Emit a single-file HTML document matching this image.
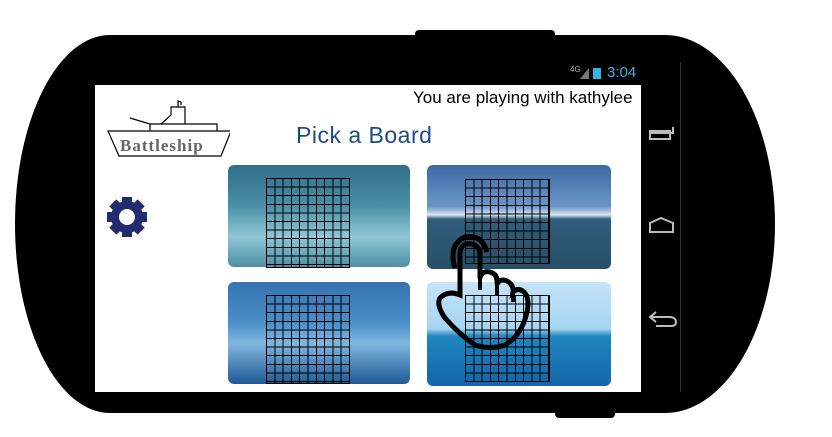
<!DOCTYPE html>
<html><head><style>
body{margin:0;width:832px;height:437px;background:#fff;position:relative;overflow:hidden;font-family:"Liberation Sans",sans-serif}
.abs{position:absolute}
.tile{position:absolute;border-radius:6px;overflow:hidden}
.grid{position:absolute;border:1px solid #000;box-sizing:border-box;
background-image:repeating-linear-gradient(90deg,transparent 0 7.3px,#000 7.3px 8.3px),repeating-linear-gradient(180deg,transparent 0 7.6px,#000 7.6px 8.6px)}
</style></head><body>
<div class="abs" style="left:415px;top:30px;width:140px;height:12px;background:#000;border-radius:4px"></div>
<div class="abs" style="left:555px;top:405px;width:60px;height:13px;background:#000;border-radius:4px"></div>
<div class="abs" style="left:15px;top:35px;width:760px;height:378px;background:#000;border-radius:95px 110px 110px 95px / 189px 189px 189px 189px"></div>
<div class="abs" style="left:680px;top:62px;width:1px;height:330px;background:#333"></div>
<div class="abs" style="left:95px;top:62px;width:546px;height:330px;background:#fff"></div>
<div class="abs" style="left:95px;top:62px;width:546px;height:23px;background:#000"></div>
<div class="abs" style="left:570px;top:65px;font-size:8px;color:#aaa">4G</div>
<div class="abs" style="left:580px;top:68px;width:0;height:0;border-left:9px solid transparent;border-bottom:11px solid #777"></div>
<div class="abs" style="left:593px;top:68px;width:8px;height:11px;background:#33b5e5"></div>
<div class="abs" style="left:607px;top:64px;font-size:15px;color:#33b5e5">3:04</div>
<div class="abs" style="left:413px;top:88px;font-size:17px;color:#000;white-space:nowrap">You are playing with kathylee</div>
<div class="abs" style="left:296px;top:122px;font-size:23px;color:#1e4b80;letter-spacing:0.5px">Pick a Board</div>
<svg class="abs" style="left:105px;top:100px" width="125" height="60">
<path d="M3,31 L126,31 L116,56 L14,56 Z M45,31 L45,24 L112,24 L112,31 M56,24 L66,15 L66,7 L80,7 L80,24 M73,7 L73,1 L76,2 L76,5 M45,24 L25,18" fill="#fff" stroke="#000" stroke-width="1.2"/>
<text x="15" y="51" font-size="17" font-weight="bold" fill="#666" font-family="Liberation Serif" letter-spacing="1">Battleship</text>
</svg>
<svg class="abs" style="left:106px;top:196px" width="42" height="42" viewBox="0 0 42 42">
<circle cx="21" cy="21" r="12" fill="none" stroke="#222a70" stroke-width="8"/>
<g fill="#222a70"><rect x="16" y="1" width="10" height="8"/><rect x="16" y="33" width="10" height="8"/><rect x="1" y="16" width="8" height="10"/><rect x="33" y="16" width="8" height="10"/>
<g transform="rotate(45 21 21)"><rect x="16" y="1" width="10" height="8"/><rect x="16" y="33" width="10" height="8"/><rect x="1" y="16" width="8" height="10"/><rect x="33" y="16" width="8" height="10"/></g></g>
</svg>
<div class="tile" style="left:228px;top:165px;width:182px;height:102px;background:linear-gradient(180deg,#2f6f88,#4a8fa6 40%,#8ec8d6 70%,#4e8fa5)"></div>
<div class="tile" style="left:427px;top:165px;width:184px;height:104px;background:linear-gradient(180deg,#3a6aa5,#6c95c5 40%,#d8e4f0 48%,#2f5d7c 52%,#284e66)"></div>
<div class="tile" style="left:228px;top:282px;width:182px;height:102px;background:linear-gradient(180deg,#3473b0,#4b8ec8 40%,#7fb7e0 60%,#205a95)"></div>
<div class="tile" style="left:427px;top:282px;width:184px;height:104px;background:linear-gradient(180deg,#c5e4f8,#a6d4f0 45%,#1f86c0 52%,#1366a8)"></div>
<div class="grid" style="left:266px;top:178px;width:84px;height:90px"></div>
<div class="grid" style="left:465px;top:179px;width:85px;height:85px"></div>
<div class="grid" style="left:266px;top:295px;width:84px;height:89px"></div>
<div class="grid" style="left:465px;top:295px;width:85px;height:87px"></div>
<svg class="abs" style="left:0;top:0" width="832" height="437">
<path d="M460,295 L460,252 Q462,242 472,244 Q480,246 480,256 L480,278 Q482,270 490,272 Q498,274 497,284 Q500,278 507,281 Q514,285 513,292 Q518,287 524,292 Q530,298 527,312 Q522,335 505,345 Q490,350 475,345 Q460,335 445,318 Q436,305 440,298 Q448,290 460,295 Z" fill="none" stroke="#000" stroke-width="5"/>
<path d="M455,268 Q448,245 465,237 Q482,234 487,252" fill="none" stroke="#000" stroke-width="5"/>
<path d="M480,278 L480,290 M497,284 L497,296 M513,292 L513,302" stroke="#000" stroke-width="4"/>
<g fill="none" stroke="#bbb" stroke-width="2">
<path d="M650,133 H673 V127 M650,139 H670 V131 H650 Z"/>
<path d="M650,232 V223 L661,218 L673,223 V232 Z"/>
<path d="M656,312 L650,317 L656,322 M650,317 H671 Q676,318 676,322 Q676,326 671,326 H656"/>
</g>
</svg>
</body></html>
